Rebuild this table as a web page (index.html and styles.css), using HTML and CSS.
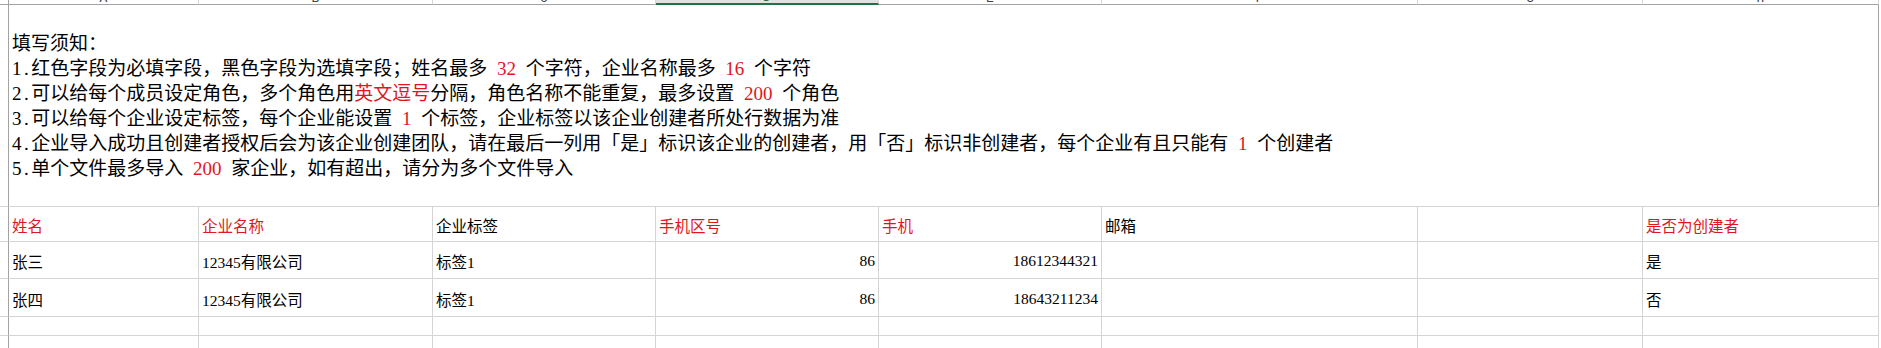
FILE: index.html
```html
<!DOCTYPE html>
<html lang="zh-CN">
<head>
<meta charset="utf-8">
<title>导入模板</title>
<link rel="stylesheet" href="styles.css">
</head>
<body>
<div class="sheet">
  <div class="corner"></div>
  <div class="ch"><span>A</span></div>
  <div class="ch"><span>B</span></div>
  <div class="ch"><span>C</span></div>
  <div class="ch sel"><span>D</span></div>
  <div class="ch"><span>E</span></div>
  <div class="ch"><span>F</span></div>
  <div class="ch"><span>G</span></div>
  <div class="ch"><span>H</span></div>

  <div class="rh"></div>
  <div class="notes">
    <p>填写须知：</p>
    <p><span class="no">1.</span>红色字段为必填字段，黑色字段为选填字段；姓名最多 <em>32</em> 个字符，企业名称最多 <em>16</em> 个字符</p>
    <p><span class="no">2.</span>可以给每个成员设定角色，多个角色用<em>英文逗号</em>分隔，角色名称不能重复，最多设置 <em>200</em> 个角色</p>
    <p><span class="no">3.</span>可以给每个企业设定标签，每个企业能设置 <em>1</em> 个标签，企业标签以该企业创建者所处行数据为准</p>
    <p><span class="no">4.</span>企业导入成功且创建者授权后会为该企业创建团队，请在最后一列用「是」标识该企业的创建者，用「否」标识非创建者，每个企业有且只能有 <em>1</em> 个创建者</p>
    <p><span class="no">5.</span>单个文件最多导入 <em>200</em> 家企业，如有超出，请分为多个文件导入</p>
  </div>

  <div class="rh"></div>
  <div class="cell req">姓名</div>
  <div class="cell req">企业名称</div>
  <div class="cell">企业标签</div>
  <div class="cell req">手机区号</div>
  <div class="cell req">手机</div>
  <div class="cell">邮箱</div>
  <div class="cell"></div>
  <div class="cell req">是否为创建者</div>

  <div class="rh"></div>
  <div class="cell">张三</div>
  <div class="cell">12345有限公司</div>
  <div class="cell">标签1</div>
  <div class="cell num">86</div>
  <div class="cell num">18612344321</div>
  <div class="cell"></div>
  <div class="cell"></div>
  <div class="cell">是</div>

  <div class="rh"></div>
  <div class="cell">张四</div>
  <div class="cell">12345有限公司</div>
  <div class="cell">标签1</div>
  <div class="cell num">86</div>
  <div class="cell num">18643211234</div>
  <div class="cell"></div>
  <div class="cell"></div>
  <div class="cell">否</div>

  <div class="rh"></div>
  <div class="cell"></div><div class="cell"></div><div class="cell"></div><div class="cell"></div>
  <div class="cell"></div><div class="cell"></div><div class="cell"></div><div class="cell"></div>

  <div class="rh"></div>
  <div class="cell"></div><div class="cell"></div><div class="cell"></div><div class="cell"></div>
  <div class="cell"></div><div class="cell"></div><div class="cell"></div><div class="cell"></div>
</div>
</body>
</html>
```

FILE: styles.css
```css
* {
  box-sizing: border-box;
  margin: 0;
  padding: 0;
}

html,
body {
  width: 1881px;
  height: 348px;
  overflow: hidden;
  background: #ffffff;
}

body {
  font-family: "Liberation Serif", "Noto Sans CJK SC", serif;
  color: #000000;
}

.sheet {
  display: grid;
  grid-template-columns: 9px 190px 234px 223px 223px 223px 316px 225px 236px;
  grid-template-rows: 5px 202px 35px 37px 38px 19px 19px;
}

/* column header strip (cut off at the top) */
.corner {
  border-right: 1px solid #a3a3a3;
  border-bottom: 1px solid #a3a3a3;
}

.ch {
  display: flex;
  justify-content: center;
  align-items: flex-end;
  overflow: hidden;
  border-right: 1px solid #d6d6d6;
  border-bottom: 1px solid #a3a3a3;
  font-family: "Liberation Mono", monospace;
  font-size: 13px;
  color: #444444;
}

.ch span {
  line-height: 13px;
  margin-bottom: -1px;
}

.ch.sel {
  background: #e1e1e1;
  border-bottom: 2px solid #217346;
  color: #217346;
}

/* row header column */
.rh {
  border-right: 1px solid #a3a3a3;
  border-bottom: 1px solid #d4d4d4;
}

/* merged instruction cell */
.notes {
  grid-column: 2 / 10;
  display: flex;
  flex-direction: column;
  justify-content: center;
  padding: 1px 0 0 3px;
  border-right: 1px solid #a3a3a3;
  border-bottom: 1px solid #d4d4d4;
  font-size: 19px;
  line-height: 25px;
  word-spacing: 0.26em;
  white-space: nowrap;
}

.notes .no {
  letter-spacing: 2.5px;
}

.notes em,
.req {
  font-style: normal;
  color: #e0161e;
}

/* table cells */
.cell {
  display: flex;
  align-items: center;
  padding: 2px 3px 0 3px;
  border-right: 1px solid #d4d4d4;
  border-bottom: 1px solid #d4d4d4;
  font-size: 15.5px;
  white-space: nowrap;
}

.cell.num {
  justify-content: flex-end;
}
```
